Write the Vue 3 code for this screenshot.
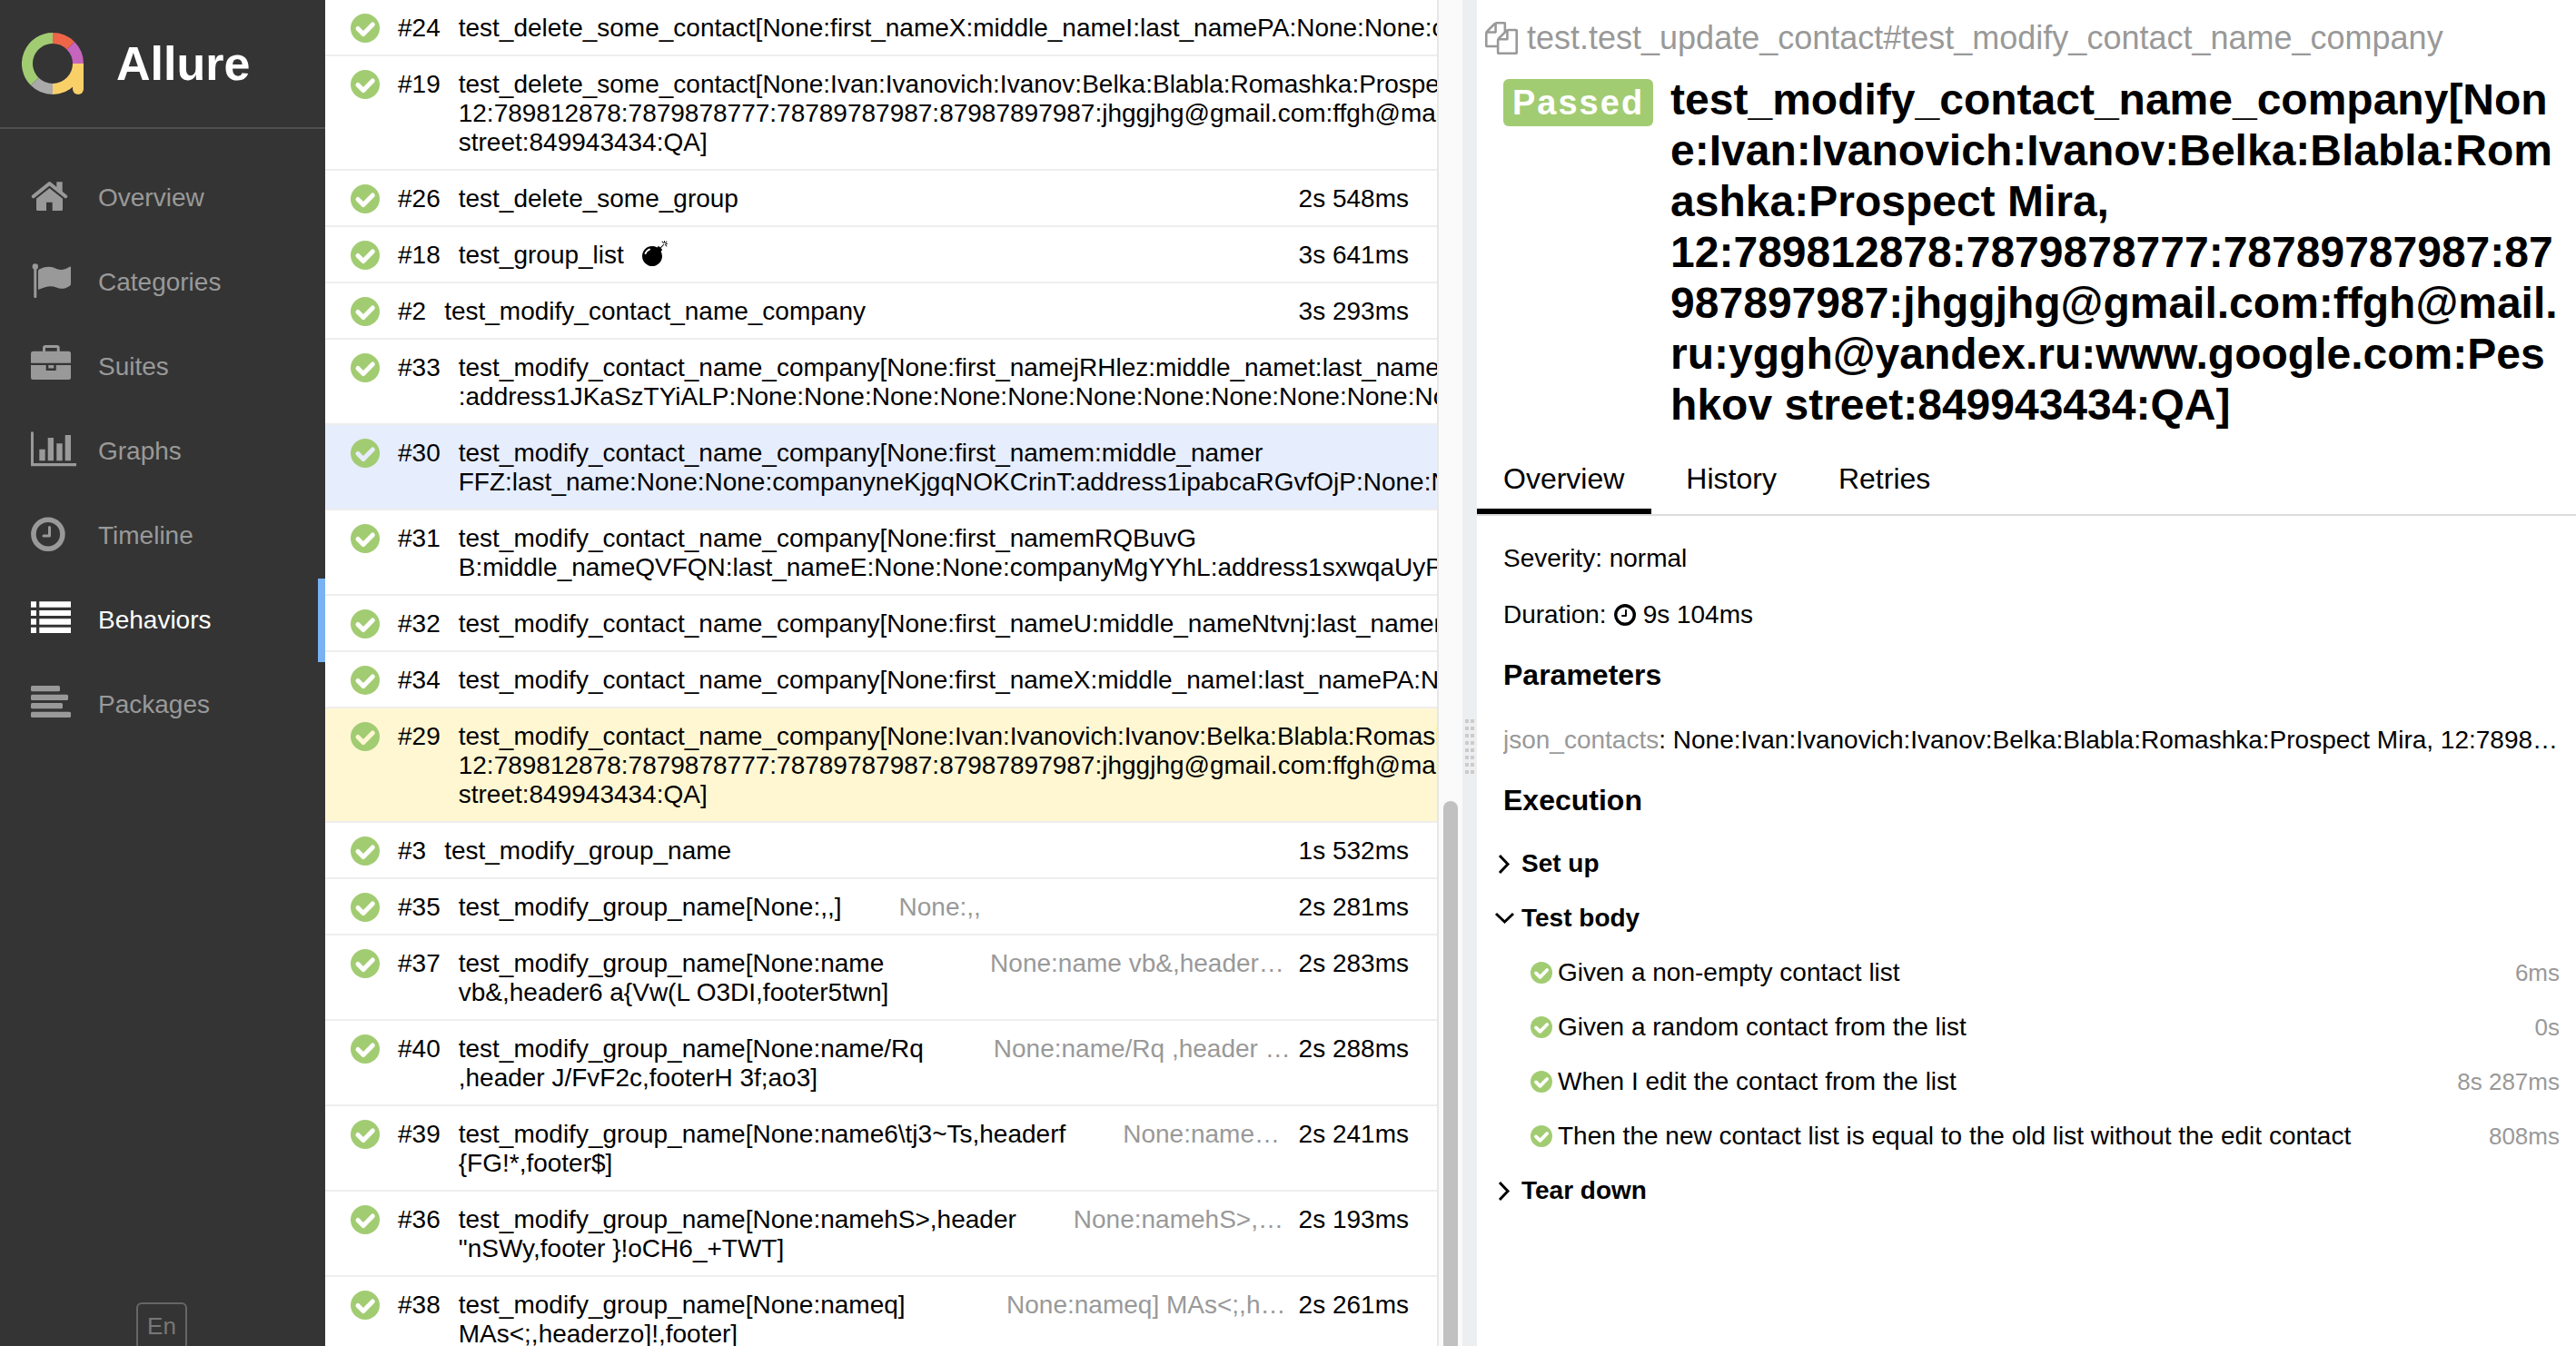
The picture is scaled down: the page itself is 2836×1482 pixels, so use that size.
<script setup>
const nav = [
  { label: 'Overview', icon: 'home' },
  { label: 'Categories', icon: 'flag' },
  { label: 'Suites', icon: 'case' },
  { label: 'Graphs', icon: 'chart' },
  { label: 'Timeline', icon: 'clock' },
  { label: 'Behaviors', icon: 'list', active: true },
  { label: 'Packages', icon: 'align' },
]

const contact =
  'None:Ivan:Ivanovich:Ivanov:Belka:Blabla:Romashka:Prospect Mira, 12:789812878:7879878777:78789787987:87987897987:jhggjhg@gmail.com:ffgh@mail.ru:yggh@yandex.ru:www.google.com:Peshkov street:849943434:QA'

const groupRow = (id, params, time) => ({
  id,
  name: `test_modify_group_name[${params}]`,
  params,
  time,
})

const rows = [
  { id: 24, long: true, name: 'test_delete_some_contact[None:first_nameX:middle_nameI:last_namePA:None:None:company' },
  { id: 19, name: `test_delete_some_contact[${contact}]` },
  { id: 26, name: 'test_delete_some_group', time: '2s 548ms' },
  { id: 18, name: 'test_group_list', time: '3s 641ms', flaky: true },
  { id: 2, name: 'test_modify_contact_name_company', time: '3s 293ms' },
  { id: 33, long: true, name: 'test_modify_contact_name_company[None:first_namejRHlez:middle_namet:last_name\n:address1JKaSzTYiALP:None:None:None:None:None:None:None:None:None:None:None' },
  { id: 30, long: true, state: 'hovered', name: 'test_modify_contact_name_company[None:first_namem:middle_namer\nFFZ:last_name:None:None:companyneKjgqNOKCrinT:address1ipabcaRGvfOjP:None:None' },
  { id: 31, long: true, name: 'test_modify_contact_name_company[None:first_namemRQBuvG\nB:middle_nameQVFQN:last_nameE:None:None:companyMgYYhL:address1sxwqaUyP' },
  { id: 32, long: true, name: 'test_modify_contact_name_company[None:first_nameU:middle_nameNtvnj:last_namer' },
  { id: 34, long: true, name: 'test_modify_contact_name_company[None:first_nameX:middle_nameI:last_namePA:None' },
  { id: 29, state: 'selected', name: `test_modify_contact_name_company[${contact}]` },
  { id: 3, name: 'test_modify_group_name', time: '1s 532ms' },
  groupRow(35, 'None:,,', '2s 281ms'),
  groupRow(37, 'None:name vb&,header6 a{Vw(L O3DI,footer5twn', '2s 283ms'),
  groupRow(40, 'None:name/Rq ,header J/FvF2c,footerH 3f;ao3', '2s 288ms'),
  groupRow(39, 'None:name6\\tj3~Ts,headerf {FG!*,footer$', '2s 241ms'),
  groupRow(36, 'None:namehS>,header "nSWy,footer }!oCH6_+TWT', '2s 193ms'),
  groupRow(38, 'None:nameq] MAs<;,headerzo]!,footer', '2s 261ms'),
]

const tabs = ['Overview', 'History', 'Retries']

const steps = [
  { name: 'Given a non-empty contact list', time: '6ms' },
  { name: 'Given a random contact from the list', time: '0s' },
  { name: 'When I edit the contact from the list', time: '8s 287ms' },
  { name: 'Then the new contact list is equal to the old list without the edit contact', time: '808ms' },
]
</script>

<template>
  <div class="app">
    <aside class="sidebar">
      <a class="brand" href="#">
        <svg class="logo" viewBox="0 0 68 68" fill="none" stroke-width="12">
          <path d="M14.2 53.8A28 28 0 0 1 34 6" stroke="#a2cc72" />
          <path d="M34 6A28 28 0 0 1 53.8 14.2" stroke="#ee6548" />
          <path d="M53.8 14.2A28 28 0 0 1 62 34" stroke="#c565bd" />
          <path d="M34 62A28 28 0 0 1 14.2 53.8" stroke="#aaa" />
          <path d="M62 34A28 28 0 0 1 34 62" stroke="#f9d068" />
          <path d="M56 34H68V62A6 6 0 0 1 56 62Z" fill="#f9d068" />
        </svg>
        <span class="brand-name">Allure</span>
      </a>
      <nav class="nav">
        <a v-for="n in nav" :key="n.label" href="#" class="nav-item" :class="{ active: n.active }">
          <svg class="nav-icon" viewBox="0 -2 52 48" fill="currentColor">
            <g v-if="n.icon === 'home'">
              <path d="M28.3 4.3H34.7V17L28.3 12Z" />
              <path d="M2.8 20.2L20.5 6L38.2 20.2" fill="none" stroke="currentColor" stroke-width="4" stroke-linecap="round" stroke-linejoin="round" />
              <path d="M6 22.8L20.5 11.2L35 22.8V34.5Q35 36 33.5 36H23.7V26.7H17V36H7.5Q6 36 6 34.5Z" />
            </g>
            <g v-else-if="n.icon === 'flag'">
              <circle cx="4.8" cy="4.4" r="3.2" />
              <rect x="3.3" y="6" width="3" height="33" rx="1" />
              <path d="M8 9.5Q8 8 9.5 7.3C19 2.5 25 5.5 29 7.2C34 9.2 39 7 42.5 4.7Q44 4 44 5.5V23.5Q44 25 42.5 26C37 29.5 33 29.5 28 27.5C22 25 16 26.5 9.5 29.5Q8 30.3 8 29Z" />
            </g>
            <g v-else-if="n.icon === 'case'">
              <path d="M14.5 5V1Q14.5 -.5 16 -.5H28.7Q30.2 -.5 30.2 1V5" fill="none" stroke="currentColor" stroke-width="3" />
              <path d="M2.5 4.7H41.5Q44 4.7 44 7.2V17.7H0V7.2Q0 4.7 2.5 4.7Z" />
              <path d="M0 20H16.7V26H27.7V20H44V33.5Q44 36 41.5 36H2.5Q0 36 0 33.5Z" />
              <rect x="19.3" y="20" width="6" height="3.5" />
            </g>
            <g v-else-if="n.icon === 'chart'">
              <path d="M0 .6H3V35H50V38.3H0Z" />
              <path d="M9.3 19.7H15.7V32.3H9.3ZM18.7 7H25V32.3H18.7ZM28.3 13.3H34.7V32.3H28.3ZM37.7 4H44V32.3H37.7Z" />
            </g>
            <g v-else-if="n.icon === 'clock'" fill="none" stroke="currentColor">
              <circle cx="18.9" cy="20.2" r="16" stroke-width="5.6" />
              <path d="M20.5 12.5V22H14" stroke-width="3" stroke-linecap="round" stroke-linejoin="round" />
            </g>
            <g v-else-if="n.icon === 'list'">
              <path d="M0 1.3H6V7.7H0ZM9.3 1.3H44V7.7H9.3ZM0 11H6V17H0ZM9.3 11H44V17H9.3ZM0 20.3H6V26.7H0ZM9.3 20.3H44V26.7H9.3ZM0 29.7H6V36H0ZM9.3 29.7H44V36H9.3Z" />
            </g>
            <g v-else>
              <rect y="1" width="32" height="6.3" rx="1.5" />
              <rect y="10.7" width="41" height="6.3" rx="1.5" />
              <rect y="20" width="35" height="6.3" rx="1.5" />
              <rect y="29.7" width="44" height="6.3" rx="1.5" />
            </g>
          </svg>
          <span>{{ n.label }}</span>
        </a>
      </nav>
      <footer class="side-foot">
        <button class="lang" type="button">En</button>
      </footer>
    </aside>

    <main class="tree">
      <a v-for="r in rows" :key="r.id" href="#" class="row" :class="r.state">
        <svg class="status" viewBox="0 0 32 32">
          <circle cx="16" cy="16" r="16" fill="#a2cc72" />
          <path class="tick" d="M8 16.5L14 22.5L24.3 12" />
        </svg>
        <span class="order">#{{ r.id }}</span>
        <span class="name" :class="{ long: r.long }">{{ r.name }}</span>
        <svg v-if="r.flaky" class="bomb" viewBox="0 0 1792 1792">
          <path d="M571 589q-10-25-34-35t-49 0q-108 44-191 127t-127 191q-10 25 0 49t35 34q13 5 24 5 42 0 60-40 34-84 98.5-148.5t148.5-98.5q25-11 35-35t0-49zm942-356l46 46-244 243 68 68q19 19 19 45.5t-19 45.5l-64 64q89 161 89 343 0 143-55.5 273.5t-150 225-225 150-273.5 55.5-273.5-55.5-225-150-150-225-55.5-273.5 55.5-273.5 150-225 225-150 273.5-55.5q182 0 343 89l64-64q19-19 45.5-19t45.5 19l68 68zm8-56q-10 10-22 10-13 0-23-10l-91-90q-9-10-9-23t9-23q10-9 23-9t23 9l90 91q10 9 10 22.5t-10 22.5zm230 230q-11 9-23 9t-23-9l-90-91q-10-9-10-22.5t10-22.5q9-10 22.5-10t22.5 10l91 90q9 10 9 23t-9 23zm41-183q0 14-9 23t-23 9h-96q-14 0-23-9t-9-23 9-23 23-9h96q14 0 23 9t9 23zm-192-192v96q0 14-9 23t-23 9-23-9-9-23v-96q0-14 9-23t23-9 23 9 9 23zm151 55l-91 90q-10 10-22 10-13 0-23-10-10-9-10-22.5t10-22.5l90-91q10-9 23-9t23 9q9 10 9 23t-9 23z" />
        </svg>
        <span v-if="r.params" class="params">{{ r.params }}</span>
        <span v-if="r.time" class="time">{{ r.time }}</span>
      </a>
    </main>
    <div class="track"><div class="thumb"></div></div>
    <div class="gutter"><div class="grip"><i v-for="d in 16" :key="d"></i></div></div>

    <section class="detail">
      <div class="fullname">
        <svg class="copy" viewBox="0 0 1792 1792" fill="currentColor">
          <path d="M1696 384q40 0 68 28t28 68v1216q0 40-28 68t-68 28h-960q-40 0-68-28t-28-68v-288h-544q-40 0-68-28t-28-68v-672q0-40 20-88t48-76l408-408q28-28 76-48t88-20h416q40 0 68 28t28 68v328q68-40 128-40h416zm-544 213l-299 299h299v-299zm-640-384l-299 299h299v-299zm196 647l316-316v-416h-384v416q0 40-28 68t-68 28h-416v640h512v-256q0-40 20-88t48-76zm956 804v-1152h-384v416q0 40-28 68t-68 28h-416v640h896z" />
        </svg>
        <span>test.test_update_contact#test_modify_contact_name_company</span>
      </div>
      <div class="heading">
        <span class="badge">Passed</span>
        <h2 class="title">test_modify_contact_name_company[{{ contact }}]</h2>
      </div>
      <nav class="tabs">
        <a v-for="(t, i) in tabs" :key="t" href="#" class="tab" :class="{ current: i === 0 }">{{ t }}</a>
      </nav>
      <div class="body">
        <p class="line">Severity: normal</p>
        <p class="line duration">
          <span>Duration:</span>
          <svg class="mini-clock" viewBox="0 0 24 24" fill="none" stroke="currentColor">
            <circle cx="12" cy="12" r="10.3" stroke-width="3.4" />
            <path d="M13 7V13H9" stroke-width="2" stroke-linecap="round" stroke-linejoin="round" />
          </svg>
          <span>9s 104ms</span>
        </p>
        <h3>Parameters</h3>
        <p class="line param"><span class="muted">json_contacts</span>: {{ contact }}</p>
        <h3>Execution</h3>
        <div class="stages">
          <button class="stage" type="button">
            <svg class="chev" viewBox="0 0 24 24"><path d="M7 3L16 12.500L7 22" /></svg>Set up
          </button>
          <button class="stage" type="button">
            <svg class="chev" viewBox="0 0 24 24"><path d="M3 7L12.500 16L22 7" /></svg>Test body
          </button>
          <div v-for="s in steps" :key="s.name" class="step">
            <svg class="step-icon" viewBox="0 0 32 32">
              <circle cx="16" cy="16" r="16" fill="#a2cc72" />
              <path class="tick" d="M8 16.5L14 22.5L24.3 12" />
            </svg>
            <span>{{ s.name }}</span>
            <span class="step-time">{{ s.time }}</span>
          </div>
          <button class="stage" type="button">
            <svg class="chev" viewBox="0 0 24 24"><path d="M7 3L16 12.500L7 22" /></svg>Tear down
          </button>
        </div>
      </div>
    </section>
  </div>
</template>

<style>
body {
  margin: 0;
  background: #fff;
}
</style>

<style scoped>
.app {
  display: flex;
  height: 100vh;
  overflow: hidden;
  font-family: "Liberation Sans", Arial, sans-serif;
  font-size: 28px;
  line-height: 32px;
  color: #000;
}
a {
  color: inherit;
  text-decoration: none;
}
button {
  font: inherit;
  color: inherit;
  background: none;
  border: 0;
  padding: 0;
}

.sidebar {
  flex: 0 0 358px;
  display: flex;
  flex-direction: column;
  overflow: hidden;
  background: #343434;
  color: #999;
}
.brand {
  display: flex;
  align-items: center;
  gap: 36px;
  height: 140px;
  padding-left: 24px;
  border-bottom: 2px solid #505050;
}
.logo {
  width: 68px;
  height: 68px;
}
.brand-name {
  font-size: 52px;
  line-height: 60px;
  font-weight: bold;
  color: #fff;
}
.nav {
  display: flex;
  flex-direction: column;
  gap: 1px;
  padding-top: 30px;
}
.nav-item {
  display: flex;
  align-items: center;
  gap: 22px;
  height: 92px;
  padding-left: 34px;
}
.nav-item.active {
  color: #fff;
  box-shadow: inset -8px 0 #78b2f2;
}
.nav-icon {
  width: 52px;
  height: 48px;
}
.side-foot {
  display: flex;
  justify-content: center;
  align-items: flex-start;
  height: 48px;
  margin-top: auto;
  padding-right: 2px;
}
.lang {
  flex: none;
  width: 56px;
  height: 52px;
  border: 2px solid #666;
  border-radius: 6px;
  font-size: 26px;
  color: #777;
}

.tree {
  flex: 1224 1 0;
  min-width: 0;
  overflow: hidden;
}
.row {
  display: flex;
  align-items: flex-start;
  padding: 15px 31px 13px 28px;
  border-bottom: 2px solid #eee;
}
.row.hovered {
  background: #e6edfd;
}
.row.selected {
  background: #fef7d2;
}
.status {
  flex: none;
  width: 32px;
  height: 32px;
  margin-right: 20px;
}
.tick {
  fill: none;
  stroke: #fff;
  stroke-width: 5;
  stroke-linecap: round;
  stroke-linejoin: round;
}
.hovered .tick {
  stroke: #e6edfd;
}
.selected .tick {
  stroke: #fef7d2;
}
.order {
  flex: none;
  margin-right: 20px;
}
.name {
  flex-shrink: 0.97;
}
.name.long {
  white-space: pre;
}
.bomb {
  flex: none;
  width: 28px;
  height: 28px;
  margin-left: 20px;
}
.params {
  min-width: 0;
  margin-left: 63px;
  margin-right: 8px;
  overflow: hidden;
  white-space: nowrap;
  text-overflow: ellipsis;
  color: #999;
}
.time {
  flex: none;
  margin-left: auto;
}

.track {
  flex: 0 0 26px;
  display: flex;
  justify-content: center;
  border-left: 2px solid #e7e7e7;
  background: #fafafa;
}
.thumb {
  width: 16px;
  margin-top: 882px;
  border-radius: 8px 8px 0 0;
  background: #c1c1c1;
}
.gutter {
  flex: 0 0 16px;
  display: flex;
  justify-content: center;
  align-items: flex-start;
  background: #eceef0;
}
.grip {
  display: grid;
  grid-template-columns: 4px 4px;
  gap: 4px 2px;
  margin-top: 792px;
}
.grip i {
  height: 4px;
  background: #ccc;
}

.detail {
  flex: 1210 1 0;
  min-width: 0;
}
.fullname {
  display: flex;
  align-items: center;
  gap: 10px;
  padding: 22px 0 20px 9px;
  font-size: 36px;
  line-height: 40px;
  color: #999;
}
.copy {
  width: 36px;
  height: 36px;
}
.heading {
  display: flex;
  align-items: baseline;
  gap: 19px;
  padding: 0 18px 0 29px;
}
.badge {
  flex: none;
  padding: 0 10px;
  border-radius: 6px;
  background: #a2cc72;
  color: #fff;
  font-size: 38px;
  line-height: 52px;
  font-weight: bold;
  letter-spacing: 2px;
}
.title {
  margin: 0;
  min-width: 0;
  font-size: 48px;
  line-height: 56px;
  overflow-wrap: anywhere;
}
.tabs {
  display: flex;
  gap: 9px;
  margin-top: 20px;
  border-bottom: 2px solid #ddd;
  font-size: 32px;
  line-height: 40px;
}
.tab {
  padding: 13px 30px 13px 29px;
  border-bottom: 6px solid transparent;
}
.tab.current {
  border-color: #000;
}
.body {
  padding: 1px 18px 0 29px;
}
.line {
  margin: 30px 0 0;
}
.duration {
  display: flex;
  align-items: center;
  gap: 8px;
}
.mini-clock {
  width: 24px;
  height: 24px;
}
h3 {
  margin: 32px 0 0;
  font-size: 32px;
  line-height: 36px;
}
.param {
  margin-top: 38px;
  overflow: hidden;
  white-space: nowrap;
  text-overflow: ellipsis;
}
.muted {
  color: #999;
}
.stages {
  display: flex;
  flex-direction: column;
  margin-top: 22px;
  margin-left: -11px;
}
.stage {
  display: flex;
  align-items: center;
  gap: 7px;
  height: 60px;
  font-weight: bold;
}
.chev {
  width: 24px;
  height: 24px;
  fill: none;
  stroke: #000;
  stroke-width: 3;
}
.step {
  display: flex;
  align-items: center;
  gap: 6px;
  height: 60px;
  padding-left: 41px;
}
.step-icon {
  width: 24px;
  height: 24px;
}
.step-time {
  margin-left: auto;
  font-size: 26px;
  color: #999;
}
</style>
